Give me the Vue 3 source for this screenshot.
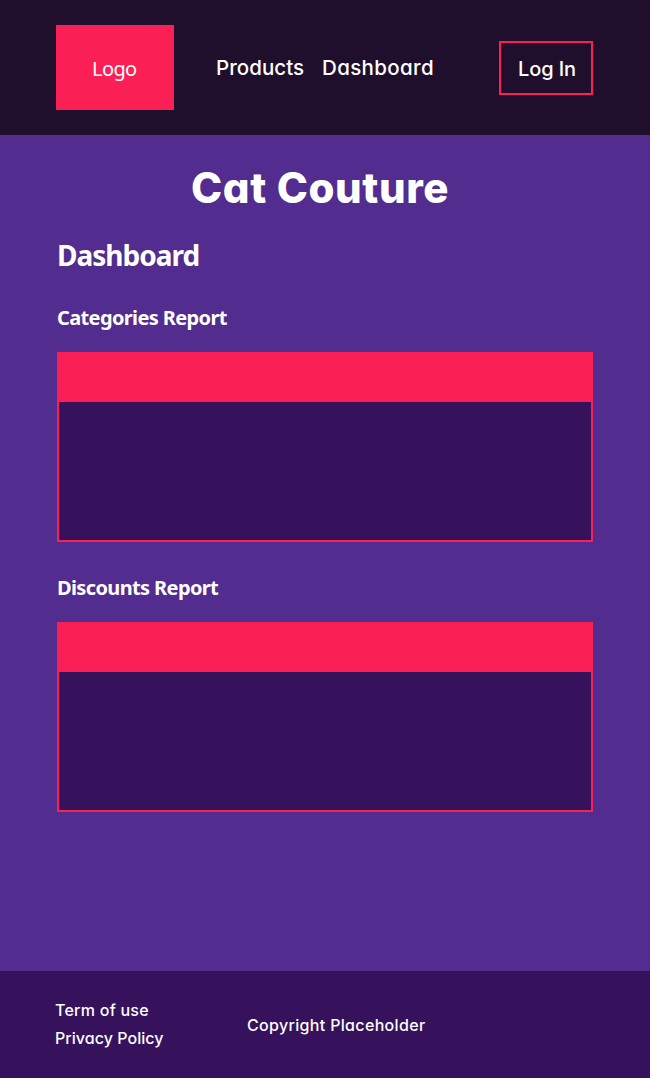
<script setup>
const links = ['Products', 'Dashboard']
const reports = ['Categories Report', 'Discounts Report']
</script>

<template>
  <div class="page">
    <header class="header">
      <div class="logo">Logo</div>
      <nav class="nav">
        <a v-for="l in links" :key="l" :class="l.toLowerCase()">{{ l }}</a>
      </nav>
      <button class="login">Log In</button>
    </header>
    <main class="main">
      <h1>Cat Couture</h1>
      <h2>Dashboard</h2>
      <section v-for="r in reports" :key="r" class="report">
        <h3>{{ r }}</h3>
        <div class="panel"><div class="panel-head"></div></div>
      </section>
    </main>
    <footer class="footer">
      <div class="legal">
        <a class="terms">Term of use</a>
        <a class="privacy">Privacy Policy</a>
      </div>
      <p class="copyright">Copyright Placeholder</p>
    </footer>
  </div>
</template>

<style>
body {
  margin: 0;
  background: #522c8e;
}
</style>

<style scoped>
.page {
  display: flex;
  flex-direction: column;
  height: 1078px;
  color: #fff;
  background: #522c8e;
  font-family: Inter, "Liberation Sans", sans-serif;
  font-feature-settings: "cv11";
  white-space: nowrap;
}
.header {
  display: flex;
  box-sizing: border-box;
  height: 135px;
  padding: 25px 57px 25px 56px;
  background: #1f0f2d;
}
.logo {
  width: 118px;
  height: 85px;
  box-sizing: border-box;
  padding: 30px 0 0 36px;
  background: #fa2056;
  font: 20px/28px "Noto Sans", "Open Sans", sans-serif;
  letter-spacing: -0.6px;
}
.nav {
  display: flex;
  gap: 17px;
  margin-left: 42px;
  padding-top: 28px;
  font-size: 20.5px;
  font-weight: 450;
  line-height: 30px;
}
.products { width: 89px; letter-spacing: 0.05px; }
.dashboard { letter-spacing: 0.35px; }
.login {
  box-sizing: border-box;
  width: 94px;
  height: 54px;
  margin: 16px 0 0 auto;
  padding: 1px 0 0 17px;
  border: 2px solid #fa2056;
  background: none;
  color: #fff;
  font: 450 20px/50px Inter, sans-serif;
  letter-spacing: -0.1px;
  text-align: left;
}
.main {
  box-sizing: border-box;
  height: 836px;
  padding: 28px 57px 0;
}
h1, h2, h3, p { margin: 0; }
h1 {
  height: 50px;
  padding-left: 134px;
  font-size: 42px;
  line-height: 50px;
  font-weight: 800;
  letter-spacing: 0.6px;
}
h2, h3 { font-family: "Noto Sans", "Open Sans", sans-serif; font-weight: 700; }
h2 {
  height: 40px;
  margin-top: 22px;
  font-size: 28px;
  line-height: 40px;
  letter-spacing: -1px;
}
.report { height: 270px; padding-top: 28px; box-sizing: border-box; }
h3 {
  height: 30px;
  margin-bottom: 19px;
  font-size: 20px;
  line-height: 30px;
  letter-spacing: -0.63px;
}
.panel {
  box-sizing: border-box;
  height: 190px;
  border: 2px solid #fa2056;
  background: #36115c;
}
.panel-head { height: 48px; background: #fa2056; }
.footer {
  display: flex;
  height: 107px;
  box-sizing: border-box;
  padding: 25px 55px 0;
  background: #36115c;
  font-size: 16px;
  font-weight: 500;
  line-height: 28px;
}
.legal { display: flex; flex-direction: column; width: 192px; }
.terms { letter-spacing: 0.25px; }
.privacy { letter-spacing: 0.05px; }
.copyright { padding-top: 15px; letter-spacing: 0.33px; }
</style>
